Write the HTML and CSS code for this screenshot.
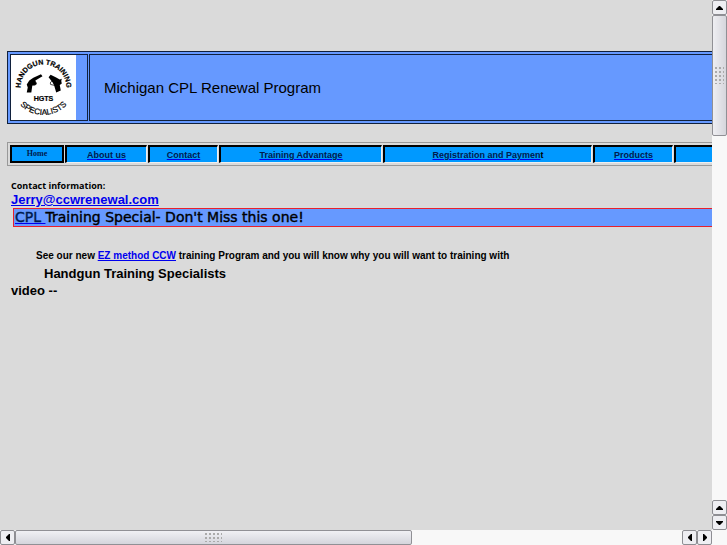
FILE: index.html
```html
<!DOCTYPE html>
<html lang="en">
<head>
<meta charset="utf-8">
<title>Michigan CPL Renewal Program</title>
<link rel="stylesheet" href="styles.css">
</head>
<body>
<div class="window">
  <main class="page">
    <header class="banner">
      <div class="banner-logo">
        <svg class="logo" viewBox="0 0 64 64" role="img" aria-label="Handgun Training Specialists">
          <defs>
            <path id="arc-top" d="M11 40A22.500 22.500 0 1 1 53 40"/>
            <path id="arc-bottom" d="M3 33A29 26 0 0 0 61 33"/>
          </defs>
          <rect width="64" height="64" fill="#fff"/>
          <g class="logo-text">
            <text class="logo-top" text-anchor="middle"><textPath href="#arc-top" startOffset="50%">HANDGUN TRAINING</textPath></text>
            <text text-anchor="middle"><textPath href="#arc-bottom" startOffset="50%">SPECIALISTS</textPath></text>
            <text class="logo-initials" x="32" y="45" text-anchor="middle">HGTS</text>
          </g>
          <path d="M15.500 29L18 25L22 22.500L29.500 19L31 21L24 25L25 29L21 30L20 37L15.500 37L16.500 32Z"/>
          <path d="M22 26.500q3-1 3 2q-1 2-4 1" fill="none" stroke="#000" stroke-width=".7"/>
          <path d="M37 22L39 19.500L44 22L48 24L50 23.500L49.500 25.500L50 28L48 29.500L49 35L44.500 37L42.500 30L41 27Z"/>
          <path d="M41 26q-3 0-2 3l4 1" fill="none" stroke="#000" stroke-width=".7"/>
        </svg>
      </div>
      <h1 class="banner-title">Michigan CPL Renewal Program</h1>
    </header>

    <nav class="menu">
      <span class="menu-item home">Home</span>
      <span class="menu-item about"><a href="#about">About us</a></span>
      <span class="menu-item contact"><a href="#contact">Contact</a></span>
      <span class="menu-item training"><a href="#training">Training Advantage</a></span>
      <span class="menu-item registration"><a href="#registration">Registration and Paymen</a>t</span>
      <span class="menu-item products"><a href="#products">Products</a></span>
      <span class="menu-item more"></span>
    </nav>

    <section class="content">
      <p class="contact-label">Contact information:</p>
      <p class="email"><a href="mailto:Jerry@ccwrenewal.com">Jerry@ccwrenewal.com</a></p>
      <p class="special"><a href="#special">CPL </a>Training Special- Don't Miss this one!</p>
      <p class="pitch">See our new <a href="#ez">EZ method CCW</a> training Program and you will know why you will want to training with</p>
      <p class="company">Handgun Training Specialists</p>
      <p class="video">video --</p>
    </section>
  </main>

  <div class="bar vertical">
    <button class="arrow" type="button" aria-label="Scroll up"><svg viewBox="0 0 7 4"><path d="M3 0h1l3 3v1H0V3z"/></svg></button>
    <div class="track"><div class="thumb"><span class="grip"></span></div></div>
    <button class="arrow" type="button" aria-label="Scroll up"><svg viewBox="0 0 7 4"><path d="M3 0h1l3 3v1H0V3z"/></svg></button>
    <button class="arrow" type="button" aria-label="Scroll down"><svg viewBox="0 0 7 4"><path d="M3 4h1l3-3V0H0v1z"/></svg></button>
  </div>

  <div class="bar horizontal">
    <button class="arrow" type="button" aria-label="Scroll left"><svg class="side" viewBox="0 0 4 7"><path d="M0 3v1l3 3h1V0H3z"/></svg></button>
    <div class="track"><div class="thumb"><span class="grip"></span></div></div>
    <button class="arrow" type="button" aria-label="Scroll left"><svg class="side" viewBox="0 0 4 7"><path d="M0 3v1l3 3h1V0H3z"/></svg></button>
    <button class="arrow" type="button" aria-label="Scroll right"><svg class="side" viewBox="0 0 4 7"><path d="M4 3v1L1 7H0V0h1z"/></svg></button>
  </div>
</div>
</body>
</html>
```
FILE: styles.css
```css
* {
  box-sizing: border-box;
}

body {
  margin: 0;
  background: #dadada;
  color: #000;
  font-family: "Liberation Sans", Arial, sans-serif;
}

h1,
p {
  margin: 0;
}

a {
  color: #0000ee;
}

.window {
  display: grid;
  grid-template-columns: minmax(0, 1fr) 15px;
  grid-template-rows: minmax(0, 1fr) 15px;
  height: 100vh;
}

.page {
  overflow: hidden;
  padding: 51px 0 0 7px;
}

/* Banner */
.banner {
  display: flex;
  gap: 1px;
  padding: 2px 0 2px 2px;
  border: 1px solid #10203c;
  border-right: 0;
  background: #6699ff;
}

.banner-logo {
  flex: 0 0 78px;
  border: 1px solid #10203c;
}

.logo {
  display: block;
  width: 65px;
  height: 65px;
}

.logo-text {
  font-size: 8px;
  stroke: #000;
  stroke-width: 0.2px;
}

.logo-top {
  font-size: 7px;
  font-weight: bold;
}

.logo-initials {
  font-size: 7px;
  font-weight: bold;
}

.banner-title {
  flex: 1;
  display: flex;
  align-items: center;
  padding-left: 14px;
  border: 1px solid #10203c;
  border-right: 0;
  font-size: 15px;
  font-weight: normal;
}

/* Menu */
.menu {
  display: flex;
  gap: 1px;
  margin-top: 18px;
  padding: 2px 0 2px 2px;
  border: 1px solid #999;
  border-right: 0;
  font-size: 9px;
  font-weight: bold;
  line-height: 16px;
  text-align: center;
}

.menu-item {
  flex: none;
  height: 18px;
  border: 1px solid #eee;
  border-top: 2px solid #000;
  border-left: 2px solid #000;
  background: #0099ff;
}

.menu-item a {
  color: #001a4d;
  text-decoration-color: #0000ee;
}

.home {
  width: 54px;
  border: 2px solid #000;
  font-family: "Liberation Serif", "Times New Roman", serif;
  font-size: 8px;
  line-height: 13px;
  color: #001a4d;
}

.about {
  width: 82px;
}

.contact {
  width: 70px;
}

.training {
  width: 163px;
}

.registration {
  width: 209px;
}

.products {
  width: 80px;
}

.more {
  width: 80px;
}

/* Content */
.content {
  padding: 14px 0 0 4px;
  font-weight: bold;
}

.contact-label {
  font-family: "Open Sans", sans-serif;
  font-size: 9px;
  line-height: 12px;
}

.email {
  font-size: 13px;
  line-height: 16px;
}

.special {
  margin-left: 2px;
  border: 1px solid #e8202c;
  border-right: 0;
  background: #6699ff;
  padding-left: 1px;
  font-family: "DejaVu Sans", Verdana, sans-serif;
  font-size: 14px;
  font-weight: normal;
  line-height: 17px;
  -webkit-text-stroke: 0.4px;
}

.special a {
  color: #001a4d;
  text-decoration-color: #0000ee;
}

.pitch {
  margin-top: 20px;
  padding-left: 25px;
  font-size: 10px;
  line-height: 18px;
  white-space: nowrap;
}

.company,
.video {
  font-size: 13px;
  line-height: 17px;
}

.company {
  padding-left: 33px;
}

/* Scroll bars */
.bar {
  display: flex;
  background: #f8f8f8;
}

.vertical {
  flex-direction: column;
}

.horizontal {
  grid-column: 1 / -1;
  padding-right: 15px;
}

.arrow {
  display: grid;
  place-items: center;
  flex: 0 0 15px;
  padding: 0;
  border: 1px solid #8e8e93;
  border-radius: 2px;
  background: #eeeef2;
}

.arrow svg {
  width: 7px;
  height: 4px;
}

.arrow .side {
  width: 4px;
  height: 7px;
}

.track {
  flex: 1;
  display: flex;
}

.vertical .track {
  flex-direction: column;
}

.thumb {
  display: grid;
  place-items: center;
  border: 1px solid #909095;
  border-radius: 2px;
}

.vertical .thumb {
  height: 25%;
  background: linear-gradient(to right, #eeeef2, #d6d6dc);
}

.horizontal .thumb {
  width: 59.5%;
  background: linear-gradient(#f0f0f4, #d4d5dc);
}

.grip {
  width: 9px;
  height: 17px;
  background: radial-gradient(circle at 1px 1px, #aaa 1px, transparent 1px) 0 0 / 4px 4px;
}

.horizontal .grip {
  width: 17px;
  height: 9px;
}
```
